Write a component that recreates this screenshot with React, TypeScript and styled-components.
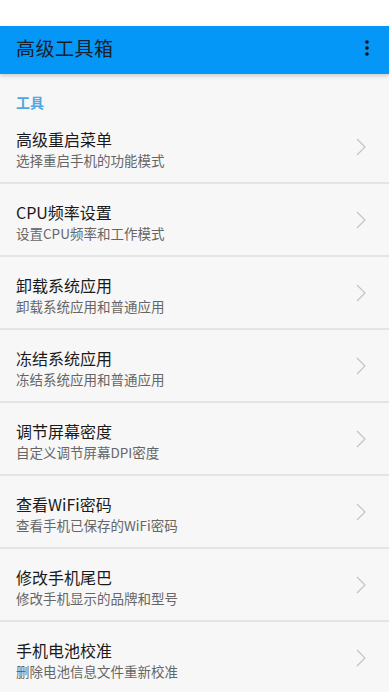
import React from 'react'
import styled, { createGlobalStyle } from 'styled-components';

const GlobalStyle = createGlobalStyle`
  html, body {
    margin: 0;
    padding: 0;
    background: #f7f7f7;
    font-family: 'Noto Sans CJK SC', 'Noto Sans', sans-serif;
  }
`

interface ToolItem {
  title: string,
  desc: string,
}

const tools: ToolItem[] = [
  { title: '高级重启菜单', desc: '选择重启手机的功能模式' },
  { title: 'CPU频率设置', desc: '设置CPU频率和工作模式' },
  { title: '卸载系统应用', desc: '卸载系统应用和普通应用' },
  { title: '冻结系统应用', desc: '冻结系统应用和普通应用' },
  { title: '调节屏幕密度', desc: '自定义调节屏幕DPI密度' },
  { title: '查看WiFi密码', desc: '查看手机已保存的WiFi密码' },
  { title: '修改手机尾巴', desc: '修改手机显示的品牌和型号' },
  { title: '手机电池校准', desc: '删除电池信息文件重新校准' },
]

const Page = styled.div`
  width: 100%;
  min-height: 100vh;
  background: #f7f7f7;
  overflow: hidden;
`
const StatusBar = styled.div`
  height: 26px;
  background: #ffffff;
`
const Toolbar = styled.header`
  height: 48px;
  background: #0497f8;
  display: flex;
  align-items: center;
  justify-content: space-between;
  padding: 0 16px;
  box-shadow: 0 2px 4px rgba(0, 0, 0, 0.18);
  position: relative;
  z-index: 1;
`
const ToolbarTitle = styled.h1`
  margin: 0 0 4px;
  font-size: 19px;
  line-height: 24px;
  font-weight: 400;
  color: #16202a;
  letter-spacing: 0.5px;
`
const MoreButton = styled.button`
  border: none;
  background: transparent;
  padding: 0;
  margin: 0 -4px 4px 0;
  width: 20px;
  height: 24px;
  display: flex;
  align-items: center;
  justify-content: center;
`
const SectionHeader = styled.div`
  padding: 19px 16px 0;
  height: 18px;
  line-height: 18px;
  font-size: 14px;
  font-weight: 700;
  color: #52a6e2;
`
const List = styled.ul`
  list-style: none;
  margin: 0;
  padding: 0;
`
const Row = styled.li`
  display: flex;
  align-items: center;
  height: 71px;
  padding: 0 16px;
  border-bottom: 2px solid #e4e4e4;
  box-sizing: content-box;
`
const RowText = styled.div`
  flex: 1;
  display: flex;
  flex-direction: column;
  gap: 2px;
  padding-top: 5px;
`
const RowTitle = styled.span`
  font-size: 16px;
  line-height: 20px;
  color: #1a1a1a;
`
const RowDesc = styled.span`
  font-size: 13.5px;
  line-height: 19px;
  color: #666666;
`
const Chevron = styled.svg`
  width: 10px;
  height: 18px;
  margin-right: 7px;
  flex-shrink: 0;
`

export default function App() {
  return (
    <Page>
      <GlobalStyle />
      <StatusBar />
      <Toolbar>
        <ToolbarTitle>高级工具箱</ToolbarTitle>
        <MoreButton aria-label="更多">
          <svg width="4" height="16" viewBox="0 0 4 16">
            <circle cx="2" cy="2" r="1.8" fill="#111" />
            <circle cx="2" cy="8" r="1.8" fill="#111" />
            <circle cx="2" cy="14" r="1.8" fill="#111" />
          </svg>
        </MoreButton>
      </Toolbar>
      <SectionHeader>工具</SectionHeader>
      <List>
        {tools.map((t) => (
          <Row key={t.title}>
            <RowText>
              <RowTitle>{t.title}</RowTitle>
              <RowDesc>{t.desc}</RowDesc>
            </RowText>
            <Chevron viewBox="0 0 10 18">
              <polyline points="1,1 9,9 1,17" fill="none" stroke="#c4c4c4" strokeWidth="1.2" />
            </Chevron>
          </Row>
        ))}
      </List>
    </Page>
  )
}
